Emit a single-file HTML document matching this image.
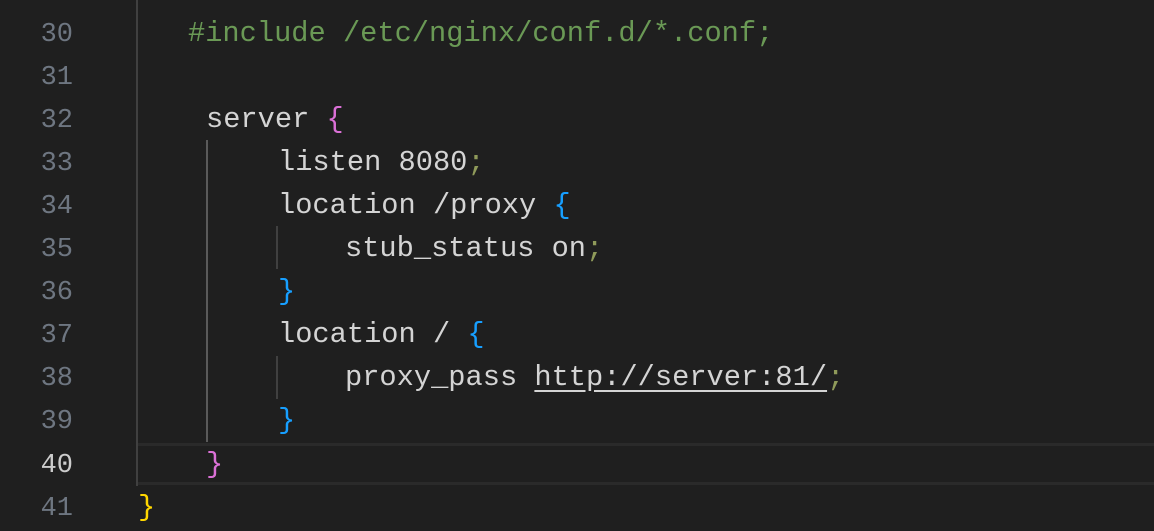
<!DOCTYPE html>
<html><head><style>
body{margin:0;width:1154px;height:528px;background:#1f1f1f;overflow:hidden;position:relative;font-family:"Liberation Mono",monospace;font-size:28.7px}
.l{position:absolute;height:43px;line-height:43px;white-space:pre;color:#d4d4d4;margin-top:1px}
.n{position:absolute;left:0;width:73px;text-align:right;height:43px;line-height:43px;color:#6e7681;margin-top:3px;font-size:27px}
.g{color:#6a9955}.p{color:#da70d6}.b{color:#179fff}.y{color:#ffd700}.s{color:#8f9a5a}
.v{position:absolute;width:2px;background:#404040}
</style></head><body>
<div style="position:absolute;left:138px;top:443px;width:1016px;height:42px;box-sizing:border-box;border-top:3px solid #2a2a2a;border-bottom:3px solid #2a2a2a"></div>
<div class="v" style="left:136px;top:0;height:486px"></div>
<div class="v" style="left:206px;top:140px;height:302px;background:#5a5a5a"></div>
<div class="v" style="left:276px;top:226px;height:43px"></div>
<div class="v" style="left:276px;top:356px;height:43px"></div>

<div class="n" style="top:11px">30</div>
<div class="n" style="top:54px">31</div>
<div class="n" style="top:97px">32</div>
<div class="n" style="top:140px">33</div>
<div class="n" style="top:183px">34</div>
<div class="n" style="top:226px">35</div>
<div class="n" style="top:269px">36</div>
<div class="n" style="top:312px">37</div>
<div class="n" style="top:355px">38</div>
<div class="n" style="top:398px">39</div>
<div class="n" style="top:442px;color:#cccccc">40</div>
<div class="n" style="top:485px">41</div>

<div class="l g" style="left:188px;top:11px">#include /etc/nginx/conf.d/*.conf;</div>
<div class="l" style="left:206px;top:97px">server <span class="p">{</span></div>
<div class="l" style="left:278px;top:140px">listen 8080<span class="s">;</span></div>
<div class="l" style="left:278px;top:183px">location /proxy <span class="b">{</span></div>
<div class="l" style="left:345px;top:226px">stub_status on<span class="s">;</span></div>
<div class="l b" style="left:278px;top:269px">}</div>
<div class="l" style="left:278px;top:312px">location / <span class="b">{</span></div>
<div class="l" style="left:345px;top:355px">proxy_pass <span style="text-decoration:underline;text-underline-offset:5px">http://server:81/</span><span class="s">;</span></div>
<div class="l b" style="left:278px;top:398px">}</div>
<div class="l p" style="left:206px;top:442px">}</div>
<div class="l y" style="left:138px;top:485px">}</div>
</body></html>
